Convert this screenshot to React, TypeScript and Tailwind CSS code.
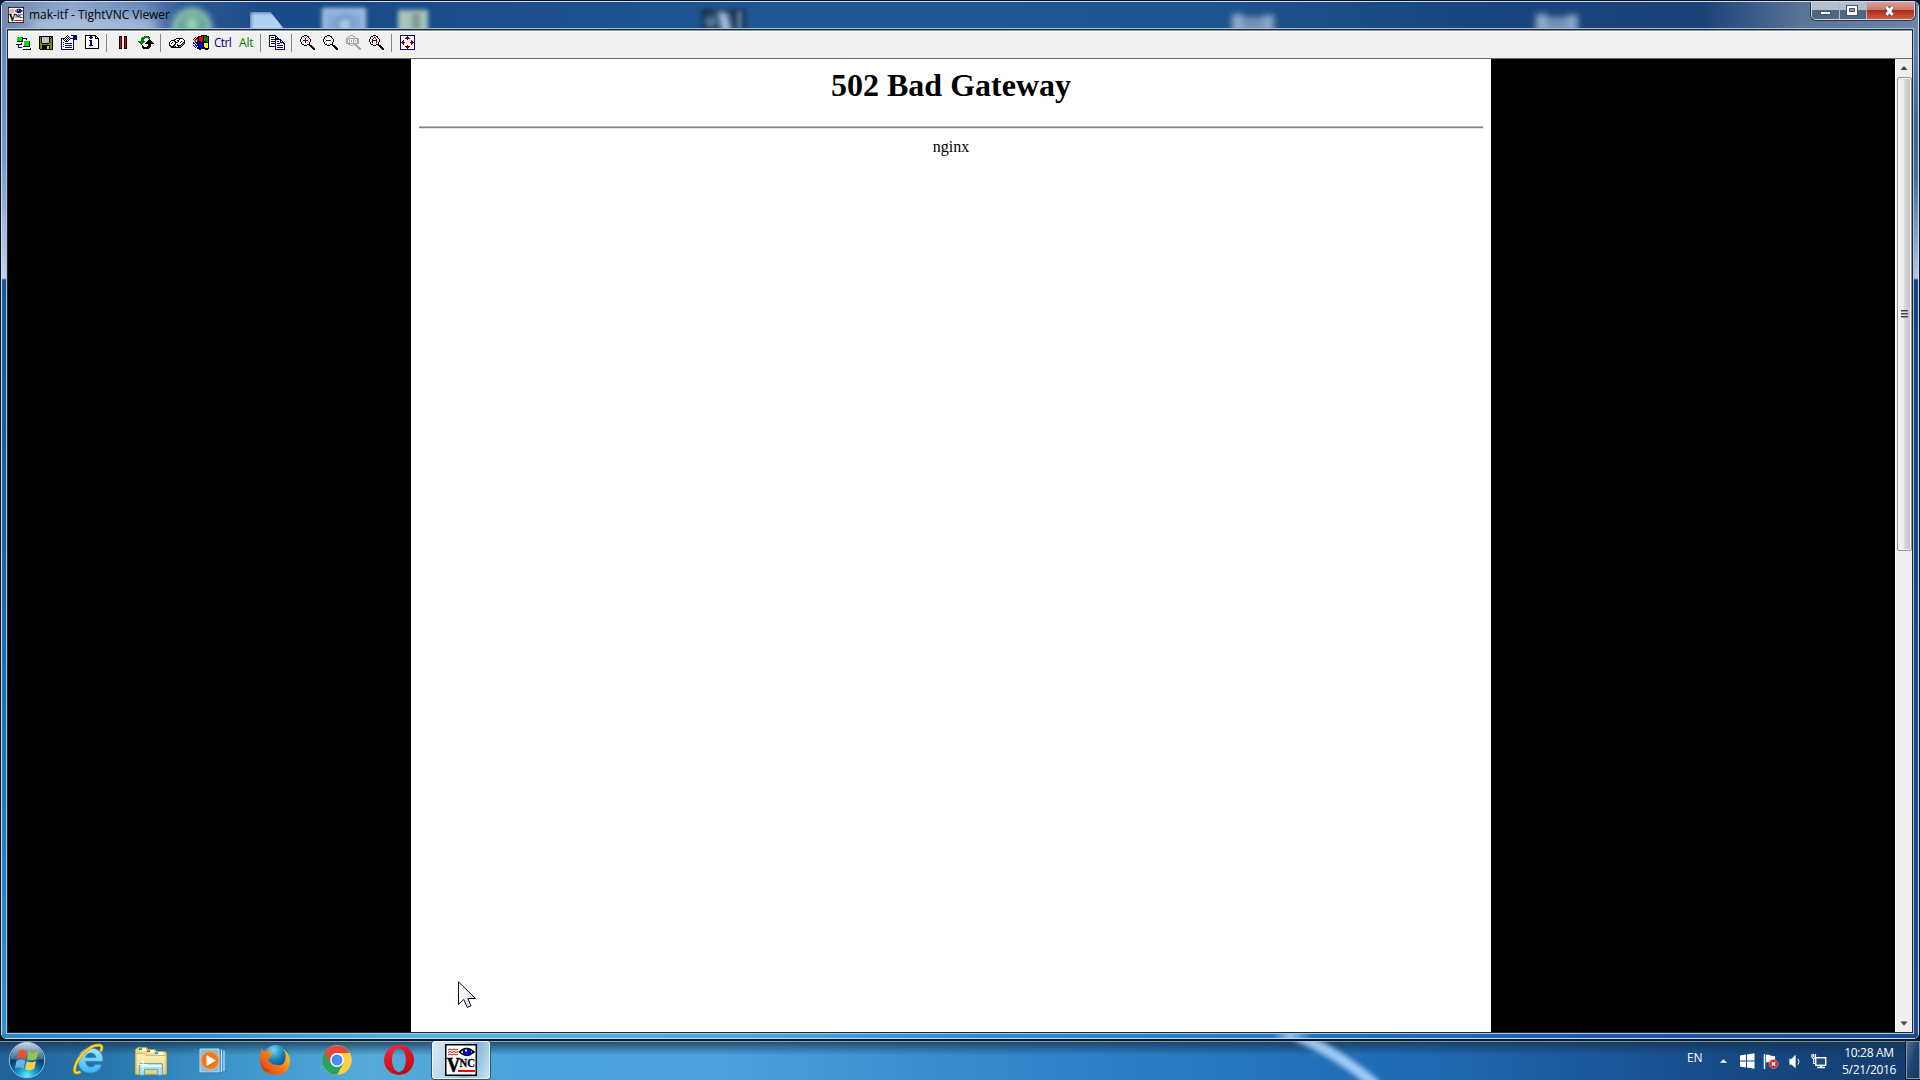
import React from "react";

const PALETTE: Record<string, string> = {
  k: "#000000", w: "#ffffff", g: "#808080", s: "#c0c0c0", n: "#000080", l: "#00e000",
  r: "#f00000", d: "#800000", y: "#ffff00", o: "#808000", b: "#0000ff", t: "#008000", e: "#a8a8a8",
};

/** Small bitmap glyph; each character of a row is one pixel. */
function Pixels({ rows, className }: { rows: string[]; className: string }) {
  const w = Math.max(...rows.map((r) => r.length));
  return (
    <svg className={className} width={w} height={rows.length} viewBox={`0 0 ${w} ${rows.length}`} shapeRendering="crispEdges">
      {rows.flatMap((row, y) =>
        row.split("").map((c, x) =>
          PALETTE[c] ? <rect key={`${x}-${y}`} x={x} y={y} width="1" height="1" fill={PALETTE[c]} /> : null
        )
      )}
    </svg>
  );
}

const CONNECT = [
  "wwwwwww.........",
  "wlllllk.........",
  "wlllllknnnn.....",
  "wlllllk...n.....",
  "wlllllkwwwwwww..",
  "wkkkkkkwlllllk..",
  ".......wlllllk..",
  "wwwwwk.wlllllk..",
  "kkkkkk.wlllllk..",
  "..n....wlllllk..",
  "..n....kkkkkkk..",
  "..nnnn..........",
  ".......wwwwwwwk.",
  ".......kkkkkkkk.",
];
const SAVE = [
  "kkkkkkkkkkkkkk",
  "kokssssssskskk",
  "kokssssssskkok",
  "kokssssssskook",
  "kokssssssskook",
  "kokssssssskook",
  "kokssssssskook",
  "kookkkkkkkoook",
  "kooooooooooook",
  "kookkkkkkkkook",
  "kookkkkksskook",
  "kookkkkksskook",
  "kookkkkksskook",
  ".kkkkkkkkkkkkk",
];
const PROPS = [
  "......k...nnnnnn",
  ".....k.k.wwwnnnn",
  "....k.k.kwwwnnnn",
  "nnnk.k.k.knnnnnn",
  "nwk.k.k.kwwwnnnn",
  "nwwk.k.kwwwwn...",
  "nwwwkkkwwwwwn...",
  "nwkwwwwwwwwwn...",
  "nwwwnnnnnnnwn...",
  "nwkwwwwwwwwwn...",
  "nwwwnnnnnnnwn...",
  "nwkwwwwwwwwwn...",
  "nwwwnnnnnnnwn...",
  "nwwwwwwwwwwwn...",
  "nnnnnnnnnnnnn...",
];
const INFO = [
  "kkkkkkkkkkk...",
  "kwwwwnnwwwkk..",
  "kwwwnnnnwwkwk.",
  "kwwwwnnwwwkkkk",
  "kwwwwwwwwwwwwk",
  "kwwwnnnwwwwwwk",
  "kwwwwnnwwwwwwk",
  "kwwwwnnwwwwwwk",
  "kwwwwnnwwwwwwk",
  "kwwwwnnwwwwwwk",
  "kwwwnnnnwwwwwk",
  "kwwwwwwwwwwwwk",
  "kwwwwwwwwwwwwk",
  "kkkkkkkkkkkkkk",
];
const PAUSE = ["kkk..kkk", ...Array(11).fill("krk..krk"), "kkk..kkk"];
const REFRESH = [
  "......ttttt.....",
  "....tttttttt....",
  "...tttt...tt....",
  "...ttt.....k....",
  "...ttt....kkk...",
  "ttttttt..kkkkk..",
  ".ttttt..kkkkkkk.",
  "..ttt..kkkkkkkkk",
  "...t......kkk...",
  "....k.....kkk...",
  "....kk...kkkk...",
  "....kkkkkkkk....",
  ".....kkkkkk.....",
];
const KEYS = [
  ".......kkkkkkk..",
  ".....kkwwwkwwwk.",
  "..kkkkwwkkwwwwwk",
  ".kwwwkkwwkwwkwwk",
  "kwwkwwkkkwwkwwkk",
  "kwkwwwkwwwwwwkgk",
  "kwwwwkkwkwwwkgk.",
  "kkwwkkwwkkkkgk..",
  ".kkkkgkwwkggk...",
  "..kkkkkkkkkk....",
];
const WINDOWS = [
  "........kkkkkk..",
  ".....kkkrrkttkkk",
  "..k.kkrrrrkttttk",
  ".k.kkkrrrrkttttk",
  "r.rrrkrrrrkttttk",
  ".rr.rkrrrrkttttk",
  "..r.kkkkrkkkkttk",
  "k.kkkkkkkkkkkkkk",
  "bb.bbkbbbbkyyyyk",
  "..b.kkbbbbkyyyyk",
  "b.bbbkbbbbkyyyyk",
  ".b.b.kbbbbkyyyyk",
  "..k.kkkbbbkkyyyk",
  "....kkkkkkkkkkkk",
  "......kk....kkk.",
];
const COPY = [
  "kkkkkkk.........",
  "kwwwwwkk........",
  "kwkkkwkwk.......",
  "kwwwwwkkkk......",
  "kwkkkknnnnnn....",
  "kwwwwwnwwwwnn...",
  "kwkkkknwnnwnwn..",
  "kwwwwwnwwwwnnnn.",
  "kwkkkknwnnnwwwnn",
  "kwwwwwnwwwwwwwwn",
  "kwwwwwnwnnnnnnwn",
  "kkkkkknwwwwwwwwn",
  "......nwnnnnnnwn",
  "......nwwwwwwwwn",
  "......nnnnnnnnnn",
];
const FULL = [
  "nnnnnnnnnnnnnnn",
  "nwwwwwwdwwwwwwn",
  "nwwwwwdddwwwwwn",
  "nwwwwdddddwwwwn",
  "nwwwwwwdwwwwwwn",
  "nwwdwwwwwwwdwwn",
  "nwddwwwwwwwddwn",
  "nddddwwwwwddddn",
  "nwddwwwwwwwddwn",
  "nwwdwwwwwwwdwwn",
  "nwwwwwwdwwwwwwn",
  "nwwwwdddddwwwwn",
  "nwwwwwdddwwwwwn",
  "nwwwwwwdwwwwwwn",
  "nnnnnnnnnnnnnnn",
];
function lens(i: string[]) {
  return [
    "....kkk.........",
    "..kkwswkk.......",
    ".kwss" + i[0] + "sswk......".slice(1),
    ".kw" + i[1] + "wk......",
    "kws" + i[2] + "swk.....",
    "kw" + i[3] + "wk.....",
    "kws" + i[4] + "swk.....",
    ".kw" + i[5] + "wk......",
    ".kws" + i[6] + "swk......",
    "..kkwswkkky.....",
    "....kkk..kkk....",
    "..........kkk...",
    "...........kkk..",
    "............kkk.",
    ".............kk.",
  ];
}
const ZOOM_IN = lens(["w", "wwdww", "wwdww", "wdddddw", "wwdww", "wwdww", "www"]);
const ZOOM_OUT = lens(["w", "wwwww", "wwwww", "wdddddw", "wwwww", "wwwww", "www"]);
const ZOOM_AUTO = lens(["d", "wdwdw", "dwwwd", "wdddddw", "dwwwd", "dwwwd", "www"]);
const ZOOM_100 = [
  "....eee.........",
  "..ee...ee.......",
  ".e.......e......",
  "eeeeeeeeeeeee...",
  "ee.e...e...ee...",
  "ee.e.e.e.e.ee...",
  "ee.e.e.e.e.ee...",
  "ee.e...e...ee...",
  "eeeeeeeeeeeee...",
  "..ee...eeee.....",
  "....eee..eee....",
  "..........eee...",
  "...........eee..",
  "............eee.",
  ".............ee.",
];

function Sep({ className }: { className: string }) {
  return <div className={`mt-[3px] h-[18px] w-px shrink-0 bg-[#858585] ${className}`} />;
}

function VncLogo({ size }: { size: number }) {
  return (
    <svg width={size} height={size} viewBox="0 0 32 32" className="block shrink-0">
      <rect x="0.75" y="0.75" width="30.500" height="30.500" fill="#fff" stroke="#000" strokeWidth="1.500" />
      <path d="M3 6l2-1 2 1 2-1 2 1 2-1M3 8.500l2-1 2 1 2-1 2 1 2-1M3 11l2-1 2 1 2-1 2 1 2-1" stroke="#b01818" fill="none" />
      <path d="M14.500 8Q21 1.500 29 7.800Q21 14.500 14.500 8Z" fill="#fff" stroke="#000" strokeWidth="1.700" />
      <circle cx="22" cy="8" r="3.800" fill="#0000f0" stroke="#000" />
      <rect x="20" y="5.500" width="2" height="2" fill="#fff" />
      <text x="2" y="28" fontFamily="Liberation Serif" fontWeight="700" fontSize="21" stroke="#000" strokeWidth=".7" textLength="13" lengthAdjust="spacingAndGlyphs">V</text>
      <text x="14.500" y="22.800" fontFamily="Liberation Serif" fontWeight="700" fontSize="12" stroke="#000" strokeWidth=".3" textLength="15.500" lengthAdjust="spacingAndGlyphs">NC</text>
      <rect x="13" y="26" width="17" height="2" fill="#f00" />
    </svg>
  );
}

function TitleBar() {
  return (
    <div className="relative flex h-[26px] shrink-0 overflow-hidden bg-[linear-gradient(90deg,#7288ae_0px,#8ca6cc_70px,#6587b6_140px,#2f5b96_180px,#1a4a88_260px,#1a4c89_420px,#1e5692_800px,#1d548f_1200px,#194680_1450px,#1a4277_1700px,#5b7396_1800px,#6f87a6_1920px)]">
      <div className="absolute inset-0">
        <div className="absolute left-[28px] top-[14px] h-5 w-32 rounded-full bg-[#b6c9e3]/80 blur-[7px]" />
        <div className="absolute left-[170px] top-[6px] size-[40px] rounded-full border-[6px] border-[#9bc7ba] bg-[#4a9a80] blur-[3px]" />
        <div className="absolute left-[183px] top-[15px] size-[14px] rotate-45 bg-[#9bc7ba] blur-[3px]" />
        <div className="absolute left-[248px] top-[10px] h-7 w-[34px] bg-[#b2d0ef] blur-[2px] [clip-path:polygon(0_0,60%_0,100%_60%,100%_100%,0_100%)]" />
        <div className="absolute left-[320px] top-[6px] h-7 w-[44px] border-4 border-[#a5c5e8] bg-[#86abd6] blur-[2px]" />
        <div className="absolute left-[333px] top-[13px] size-5 rounded-full border-4 border-[#7698c8] bg-[#a6c4e4] blur-[2px]" />
        <div className="absolute left-[396px] top-[8px] h-6 w-[30px] bg-[#a8c3bb] blur-[2px]" />
        <div className="absolute left-[410px] top-[11px] h-6 w-[8px] bg-[#829b92] blur-[2px]" />
        <div className="absolute left-[699px] top-[7px] h-6 w-[45px] bg-[#1b3657] blur-[2px]" />
        <div className="absolute left-[703px] top-[14px] h-3 w-[12px] rounded-full bg-[#5d7fa2] blur-[3px]" />
        <div className="absolute left-[718px] top-[10px] h-6 w-[10px] skew-x-12 bg-[#a8c4e0] blur-[3px]" />
        <div className="absolute left-[735px] top-[9px] h-6 w-[5px] bg-[#5d7fa2] blur-[2px]" />
        {[1230, 1534].map((x) => (
          <div key={x} className="absolute top-[12px] flex h-5 w-[42px] blur-[3px]" style={{ left: x }}>
            <div className="w-3 bg-[#90acc9]" />
            <div className="mt-[3px] w-5 bg-[#7593b6]" />
            <div className="mt-px w-3 bg-[#8ba7c6]" />
          </div>
        ))}
      </div>
      <div className="relative ml-[6px] mt-[5px]"><VncLogo size={16} /></div>
      <div className="relative ml-[5px] mt-[4px] w-[146px] whitespace-nowrap font-['Open_Sans',sans-serif] text-[12px] leading-[18px] tracking-[-0.04px] text-black">
        mak-itf - TightVNC Viewer
      </div>
      <div className="relative -mt-px ml-auto mr-[3px] flex h-[19px] w-[104px] overflow-hidden rounded-b-[5px] border border-[#cfd7e2] shadow-[0_0_0_1px_#26364f]">
        <div className="flex w-[28px] items-end justify-center border-r border-[#aebaca] bg-linear-to-b from-[#b5bfce] from-50% to-[#506685] to-50% pb-[4px]">
          <div className="h-[4px] w-[11px] border border-[#4b5568] bg-white" />
        </div>
        <div className="flex w-[27px] items-center justify-center border-r border-[#aebaca] bg-linear-to-b from-[#b5bfce] from-50% to-[#506685] to-50%">
          <svg className="-translate-x-px" width="12" height="11" viewBox="0 0 12 11"><rect x="0.5" y="0.5" width="11" height="10" fill="#fff" stroke="#4b5568" /><rect x="3.5" y="3.5" width="5" height="3" fill="#8594ad" stroke="#4b5568" /></svg>
        </div>
        <div className="flex flex-1 items-center justify-center bg-[linear-gradient(#dba095,#c9796d_48%,#b02b18_50%,#d15b42)]">
          <svg className="-translate-x-px" width="13" height="12" viewBox="0 0 13 12"><path d="M3.500 2.200L9.500 9.800M9.500 2.200L3.500 9.800" stroke="#535666" strokeWidth="4.800" /><path d="M3.500 2.200L9.500 9.800M9.500 2.200L3.500 9.800" stroke="#fff" strokeWidth="2.800" /></svg>
        </div>
      </div>
    </div>
  );
}

function Toolbar() {
  const label = "mt-[4px] whitespace-nowrap font-['Open_Sans',sans-serif] text-[12px] leading-4";
  return (
    <div className="flex h-[29px] shrink-0 items-start border-b border-t border-b-[#696969] border-t-[#8b958b] bg-[#f0f0f0] shadow-[inset_0_1px_0_#fff]">
      <Pixels rows={CONNECT} className="ml-[8px] mt-[5px] shrink-0" />
      <Pixels rows={SAVE} className="ml-[7px] mt-[5px] shrink-0" />
      <Pixels rows={PROPS} className="ml-[8px] mt-[4px] shrink-0" />
      <Pixels rows={INFO} className="ml-[8px] mt-[4px] shrink-0" />
      <Sep className="ml-[7px]" />
      <Pixels rows={PAUSE} className="ml-[12px] mt-[5px] shrink-0" />
      <Pixels rows={REFRESH} className="ml-[11px] mt-[5px] shrink-0" />
      <Sep className="ml-[6px]" />
      <Pixels rows={KEYS} className="ml-[8px] mt-[7px] shrink-0" />
      <Pixels rows={WINDOWS} className="ml-[8px] mt-[4px] shrink-0" />
      <div className={`${label} ml-[5px] w-[19px] tracking-[-0.7px] text-[#000080]`}>Ctrl</div>
      <div className={`${label} ml-[6px] w-[15px] tracking-[-0.2px] text-[#008000]`}>Alt</div>
      <Sep className="ml-[6px]" />
      <Pixels rows={COPY} className="ml-[8px] mt-[4px] shrink-0" />
      <Sep className="ml-[6px]" />
      <Pixels rows={ZOOM_IN} className="ml-[8px] mt-[4px] shrink-0" />
      <Pixels rows={ZOOM_OUT} className="ml-[7px] mt-[4px] shrink-0" />
      <Pixels rows={ZOOM_100} className="ml-[7px] mt-[4px] shrink-0" />
      <Pixels rows={ZOOM_AUTO} className="ml-[7px] mt-[4px] shrink-0" />
      <Sep className="ml-[6px]" />
      <Pixels rows={FULL} className="ml-[8px] mt-[4px] shrink-0" />
    </div>
  );
}

function Scrollbar() {
  return (
    <div className="flex w-[17px] shrink-0 flex-col items-center border-l border-white bg-[#efefef]">
      <svg width="16" height="18" viewBox="0 0 16 18"><path d="M4.500 11L8 7l3.500 4z" fill="#444" /></svg>
      <div className="flex h-[474px] w-[15px] shrink-0 flex-col items-start justify-center gap-px rounded-[2px] border border-[#979797] bg-[linear-gradient(90deg,#f6f6f6,#ececee_45%,#d2d2d6_55%,#c4c4c9)] pl-[3px] shadow-[inset_0_0_0_1px_#f5f5f5]">
        {[0, 1, 2].map((i) => <div key={i} className="h-[2px] w-[7px] border-b border-[#999] bg-[#444]" />)}
      </div>
      <svg className="mt-auto" width="16" height="17" viewBox="0 0 16 17"><path d="M4.500 6.500L8 10.500l3.500-4z" fill="#444" /></svg>
    </div>
  );
}

function RemoteScreen() {
  return (
    <div className="relative flex min-w-0 flex-1 bg-black">
      <div className="ml-[403px] w-[1080px] bg-white px-[7px] text-center font-['Liberation_Serif',serif] text-black">
        <h1 className="mt-[8px] text-[32px] font-bold leading-[37px]">502 Bad Gateway</h1>
        <div className="mx-px mt-[22px] h-[3px] border-b border-t border-b-[#e4e4e4] border-t-[#b9b9b9] bg-[#858585]" />
        <p className="mt-[9px] text-[16px] leading-[18px]">nginx</p>
      </div>
      <svg className="absolute left-[450px] top-[922px]" width="19" height="28" viewBox="0 0 19 28">
        <defs><linearGradient id="cur" x1="0" y1="0" x2="1" y2="1"><stop offset=".3" stopColor="#fff" /><stop offset="1" stopColor="#c8c8c8" /></linearGradient></defs>
        <path d="M.5.8V23.500L5.800 18.500L9.300 26.500L13 24.800L9.800 17.500H17.500Z" fill="url(#cur)" stroke="#0a0a28" />
      </svg>
    </div>
  );
}

function StartOrb() {
  return (
    <svg width="38" height="38" viewBox="0 0 38 38" className="block">
      <defs>
        <radialGradient id="orb" cx=".5" cy=".95" r=".85"><stop offset="0" stopColor="#5ff0ff" /><stop offset=".3" stopColor="#159ed0" /><stop offset=".65" stopColor="#0b3d70" /><stop offset="1" stopColor="#33597e" /></radialGradient>
        <linearGradient id="gloss" x1="0" y1="0" x2="0" y2="1"><stop offset="0" stopColor="#e6edf3" stopOpacity=".85" /><stop offset="1" stopColor="#a5bac9" stopOpacity=".25" /></linearGradient>
      </defs>
      <circle cx="19" cy="19" r="17.700" fill="url(#orb)" stroke="#8fc3e0" strokeWidth="1" />
      <path d="M2.500 18A16.500 16.500 0 0 1 35.500 18Q19 22 2.500 18Z" fill="url(#gloss)" />
      <path d="M10.500 10Q14.500 7.300 19 10L17.500 18Q13.500 15.500 9 18Z" fill="#e8552a" />
      <path d="M20.500 10.500Q25 13 30.500 10L28.500 18Q23.500 20.500 19 18.300Z" fill="#8fc74a" />
      <path d="M8.500 19.800Q13 17.200 17.200 19.800L15.700 27.500Q11.500 25 7 27.500Z" fill="#69b4f0" />
      <path d="M18.700 20.200Q23 22.500 28 20L26.200 27.800Q21.500 30.500 17.200 28Z" fill="#ffd044" />
    </svg>
  );
}

function InternetExplorer() {
  return (
    <svg width="34" height="34" viewBox="0 0 34 34" className="block">
      <defs><linearGradient id="ie" x1="0" y1="0" x2="0" y2="1"><stop offset="0" stopColor="#a9ecff" /><stop offset="1" stopColor="#39b3ee" /></linearGradient></defs>
      <path d="M31 19.500H13.500Q14.500 25 19 25Q22 25 23.500 22.500H30Q27 31 18.500 31Q6 30.500 6 18.500Q7 6.500 18.500 6Q31.500 6.500 31 19.500ZM13.500 15.500H24Q23 11 18.800 11Q14.500 11 13.500 15.500Z" fill="url(#ie)" stroke="#2f83c0" strokeWidth=".7" fillRule="evenodd" />
      <path d="M28.500 9.500Q31.500 4.500 28 3.300Q20 2 10.500 12Q1.500 22.500 2.800 29.500Q4 32.300 8.500 29.700" fill="none" stroke="#b98a00" strokeWidth="3.200" />
      <path d="M28.500 9.500Q31.500 4.500 28 3.300Q20 2 10.500 12Q1.500 22.500 2.800 29.500Q4 32.300 8.500 29.700" fill="none" stroke="#ffd72c" strokeWidth="2" />
    </svg>
  );
}

function Explorer() {
  return (
    <svg width="34" height="32" viewBox="0 0 34 32" className="block">
      <defs><linearGradient id="fold" x1="0" y1="0" x2="0" y2="1"><stop offset="0" stopColor="#fff3ba" /><stop offset="1" stopColor="#ecd172" /></linearGradient></defs>
      <path d="M1.500 27V2.500L4 .5H12.500L14 2.500H21L22.500 4.500H31L32.500 6.500V27Z" fill="#efd990" stroke="#bfa557" />
      <rect x="5" y="1.200" width="7" height="3" fill="#fff" /><rect x="5" y="1.200" width="3" height="2" fill="#18a839" />
      <rect x="13" y="3.200" width="7" height="3" fill="#fff" /><rect x="13" y="3.200" width="3" height="2" fill="#d0412d" />
      <rect x="21" y="5.200" width="8" height="3" fill="#fff" /><rect x="21" y="5.200" width="3" height="2" fill="#228fdb" />
      <path d="M2 27V6.500H10L12 8.500H32V27Z" fill="url(#fold)" stroke="#d8bb66" />
      <path d="M5.500 28V17.500Q5.500 16.500 7 16.500H27Q28.500 16.500 28.500 18V28H23.500V22.500H10.500V28Z" fill="#a5dff1" stroke="#6fa8c4" />
      <path d="M7 18H27V20H7Z" fill="#e4fbff" /><path d="M9 12.500V23M4 17.500H14" stroke="#fff" strokeWidth="1" />
    </svg>
  );
}

function MediaPlayer() {
  return (
    <svg width="30" height="27" viewBox="0 0 30 27" className="block">
      <path d="M22.500 1.500V24M25 2.500V23" stroke="#c5e3f5" strokeWidth="1.200" />
      <path d="M1 1H20V24H1Z" fill="#83bfe3" stroke="#b7ddf1" />
      <path d="M1 25H22M26 23H29" stroke="#437fa9" />
      <circle cx="11" cy="12.500" r="9" fill="#f27820" stroke="#ffa65b" />
      <path d="M7.500 7L17 12.500L7.500 18Z" fill="#fff" />
    </svg>
  );
}

function Firefox() {
  return (
    <svg width="32" height="32" viewBox="0 0 32 32" className="block">
      <defs>
        <radialGradient id="globe" cx=".4" cy=".2" r=".8"><stop offset="0" stopColor="#75d8f5" /><stop offset=".5" stopColor="#167db8" /><stop offset="1" stopColor="#093c7b" /></radialGradient>
        <linearGradient id="fox" x1="0" y1="1" x2="1" y2="0"><stop offset="0" stopColor="#d83a14" /><stop offset=".5" stopColor="#f57a18" /><stop offset="1" stopColor="#ffdf3b" /></linearGradient>
      </defs>
      <circle cx="17" cy="14" r="13" fill="url(#globe)" />
      <path d="M2.500 4.500Q3.500 7 6 7.500L11.500 5Q10 8 10.500 9.500L14 11L10 14Q8 17.500 12 18.500Q13 21 18 21Q25 22 26 16Q27.500 11 25.500 7Q24 5 22 3.800Q31 8 31 17Q30 31 16 31Q1.500 30 1 16Q1 9 2.500 4.500Z" fill="url(#fox)" />
      <path d="M1 15Q3 24 12 27Q3 31 1 15" fill="#c93818" opacity=".7" />
    </svg>
  );
}

function Chrome() {
  return (
    <svg width="30" height="30" viewBox="0 0 30 30" className="block">
      <circle cx="15" cy="15" r="14.700" fill="#ffcf48" />
      <path d="M15 15L2.300 7.500A14.700 14.700 0 0 0 15 29.700L21.500 18.500Z" fill="#27a35d" />
      <path d="M2.300 7.600A14.700 14.700 0 0 1 27.800 8H15L8.800 18.500Z" fill="#dc4b3e" />
      <circle cx="15" cy="15" r="6.900" fill="#fff" /><circle cx="15" cy="15" r="5.500" fill="#4b8bf4" />
    </svg>
  );
}

function Opera() {
  return (
    <svg width="30" height="30" viewBox="0 0 30 30" className="block">
      <defs><linearGradient id="op" x1="0" y1="0" x2="0" y2="1"><stop offset="0" stopColor="#ff2234" /><stop offset="1" stopColor="#bd0f18" /></linearGradient></defs>
      <path fillRule="evenodd" fill="url(#op)" d="M15 0A15 15 0 1 0 15 30A15 15 0 1 0 15 0ZM15 3C19 3 21.800 8 21.800 15S19 27 15 27S8 22 8 15S11 3 15 3Z" />
      <path d="M15 3C18 1 21 1.500 24 3.200C29 7 30 11 30 15S28 24 24 26.800C20 29 18 28 15 27C19 27 21.800 22 21.800 15S19 3 15 3Z" fill="#8e0c14" opacity=".2" />
    </svg>
  );
}

function Tray() {
  return (
    <div className="ml-auto flex font-['Open_Sans',sans-serif] text-[12px] text-white">
      <div className="mt-[8px] w-[32px] leading-[17px] tracking-[-0.1px]">EN</div>
      <svg className="mt-[17px] shrink-0" width="9" height="6" viewBox="0 0 9 6"><path d="M.5 5L4.500 1L8.500 5Z" fill="#fff" stroke="#123050" strokeWidth=".4" /></svg>
      <svg className="ml-[11px] mt-[12px] shrink-0" width="16" height="16" viewBox="0 0 16 16"><path d="M1 2.500L7 1.600V7.500H1ZM8 1.400L15.500.3V7.500H8ZM1 8.500H7V14.400L1 13.500ZM8 8.500H15.500V15.700L8 14.600Z" fill="#fff" /></svg>
      <svg className="ml-[8px] mt-[12px] shrink-0" width="16" height="17" viewBox="0 0 16 17"><path d="M1.500 1V16" stroke="#fff" strokeWidth="1.500" /><path d="M3 2Q5 1 7.500 2.500Q10 3.500 12 3V10Q9 11 7 9.500Q5 8.500 3 9.500Z" fill="#fff" /><circle cx="10.500" cy="11" r="4.500" fill="#dc2427" stroke="#f7a1a1" strokeWidth=".6" /><path d="M8.800 9.300L12.200 12.700M12.200 9.300L8.800 12.700" stroke="#fff" strokeWidth="1.400" /></svg>
      <svg className="ml-[9px] mt-[13px] shrink-0" width="14" height="16" viewBox="0 0 14 16"><path d="M1.500 5H3.500L7.500 1V14L3.500 10.500H1.500Z" fill="#fff" stroke="#c5cfda" strokeWidth=".5" /><path d="M10 5Q12 7.500 10 10.500" stroke="#fff" fill="none" /></svg>
      <svg className="ml-[9px] mt-[12px] shrink-0" width="16" height="17" viewBox="0 0 16 17"><rect x="4.700" y="4.700" width="10" height="7.600" fill="#244a75" stroke="#fff" strokeWidth="1.400" /><path d="M6 14.500H14M10 12V15" stroke="#fff" strokeWidth="1.600" /><path d="M1 1V4Q1 5.500 2.500 5.500T4.500 4V1M2.700 5.500V10.500H5M2.700 1V4" stroke="#fff" strokeWidth="1.200" fill="none" /></svg>
      <div className="ml-[15px] mt-[3px] w-[54px] whitespace-nowrap text-center leading-[17px]">
        <div className="tracking-[-0.3px]">10:28 AM</div>
        <div className="tracking-[-0.5px]"><span className="tracking-[-0.3px]">5/21/2016</span></div>
      </div>
      <div className="ml-[10px] h-[38px] w-[14px] border border-[#7c93ad] bg-linear-to-br from-[#71869c]/70 via-[#1e446f] to-[#153761] shadow-[0_0_0_1px_#0a1e38]" />
    </div>
  );
}

function Taskbar() {
  return (
    <div className="relative flex h-10 shrink-0 overflow-hidden border-t border-[#0b1620] bg-[linear-gradient(90deg,#216199_0px,#2876ad_110px,#3d97ca_240px,#55aad8_370px,#4ba4db_500px,#4ba2dc_720px,#358bce_960px,#2479c1_1200px,#1f65af_1460px,#174f8e_1680px,#133b6a_1920px)]">
      <div className="absolute inset-x-0 top-0 h-[14px] border-t border-[#9cb2bd]/70 bg-linear-to-b from-[#17334d]/75 to-transparent" />
      <svg className="absolute left-[1280px] top-0" width="120" height="40" viewBox="0 0 120 40">
        <path d="M16 -6Q58 12 96 44" fill="none" stroke="#abd3fc" strokeWidth="11" opacity=".9" filter="url(#soft)" />
        <defs><filter id="soft"><feGaussianBlur stdDeviation="2.500" /></filter></defs>
      </svg>
      <div className="relative flex flex-1">
        <div className="ml-[8px] mt-0"><StartOrb /></div>
        <div className="ml-[26px] mt-px"><InternetExplorer /></div>
        <div className="ml-[28px] mt-[6px]"><Explorer /></div>
        <div className="ml-[31px] mt-[7px]"><MediaPlayer /></div>
        <div className="ml-[30px] mt-[3px]"><Firefox /></div>
        <div className="ml-[31px] mt-[4px]"><Chrome /></div>
        <div className="ml-[32px] mt-[4px]"><Opera /></div>
        <div className="ml-[18px] flex h-[38px] w-[58px] justify-center rounded-[3px] border border-white/80 bg-[linear-gradient(110deg,#dce9f2,#a9cfe7_45%,#81b7d9_65%,#c7e2f2)] pt-[2px] shadow-[0_0_0_1px_#265675]"><VncLogo size={32} /></div>
        <Tray />
      </div>
    </div>
  );
}

export default function App() {
  return (
    <div className="flex h-[1080px] w-[1920px] flex-col overflow-hidden bg-[#0a1a30]">
      <div className="h-[1040px] shrink-0 overflow-hidden rounded-[6px] border border-[#081428]">
        <div className="flex h-full flex-col overflow-hidden rounded-[5px] border border-[#cfdceb]">
          <TitleBar />
          <div className="flex h-[1006px] shrink-0">
            <div className="w-[4px] shrink-0 bg-[linear-gradient(#6b86ae_0px,#7b97c2_130px,#c6d2e4_250px,#1d5797_252px,#1f5f9f_500px,#2b7fc0_850px,#3590cb_1006px)]" />
            <div className="flex min-w-0 flex-1 flex-col border border-[#a9c3dc]">
              <div className="flex min-h-0 flex-1 flex-col border border-[#1a2a3c]">
                <Toolbar />
                <div className="flex min-h-0 flex-1">
                  <RemoteScreen />
                  <Scrollbar />
                </div>
              </div>
            </div>
            <div className="w-[4px] shrink-0 bg-[linear-gradient(#7188a6_0px,#3f6390_100px,#4a6c99_150px,#b4c7dd_250px,#16467f_252px,#1b4b83_600px,#1b508e_1006px)]" />
          </div>
          <div className="h-[4px] shrink-0 bg-[linear-gradient(90deg,#2b86c6_0px,#3591cf_200px,#55b2df_420px,#4ca9e0_720px,#2f86cd_1050px,#2779c2_1270px,#8dc3f1_1288px,#2373bf_1310px,#1c5aa3_1600px,#184e8f_1920px)]" />
        </div>
      </div>
      <Taskbar />
    </div>
  );
}
